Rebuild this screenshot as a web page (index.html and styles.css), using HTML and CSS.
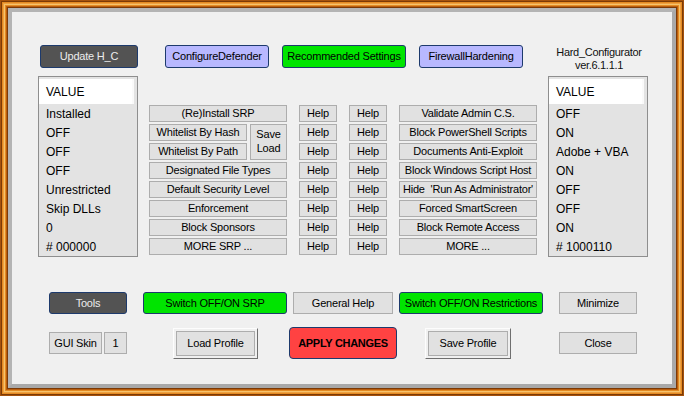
FILE: index.html
```html
<!DOCTYPE html>
<html>
<head>
<meta charset="utf-8">
<link rel="stylesheet" href="styles.css">
</head>
<body>
<div class="frame">
  <div class="win">
    <div class="row top">
      <div class="btn round dark w98 ml1">Update H_C</div>
      <div class="btn round lav w104 ml27">ConfigureDefender</div>
      <div class="btn round green w124 ml13">Recommended Settings</div>
      <div class="btn round lav w104 ml13">FirewallHardening</div>
      <div class="title ml26">
        <div>Hard_Configurator</div>
        <div>ver.6.1.1.1</div>
      </div>
    </div>

    <div class="row main">
      <div class="list">
        <div class="head">VALUE</div>
        <div class="item">Installed</div>
        <div class="item">OFF</div>
        <div class="item">OFF</div>
        <div class="item">OFF</div>
        <div class="item">Unrestricted</div>
        <div class="item">Skip DLLs</div>
        <div class="item">0</div>
        <div class="item"># 000000</div>
      </div>

      <div class="grid">
        <div class="btn flat">(Re)Install SRP</div>
        <div class="btn flat">Help</div>
        <div class="btn flat">Help</div>
        <div class="btn flat">Validate Admin C.S.</div>

        <div class="wl">
          <div class="btn flat hash">Whitelist By Hash</div>
          <div class="btn flat sl">Save<br>Load</div>
          <div class="btn flat path">Whitelist By Path</div>
        </div>
        <div class="btn flat">Help</div>
        <div class="btn flat">Help</div>
        <div class="btn flat">Block PowerShell Scripts</div>

        <div class="btn flat">Help</div>
        <div class="btn flat">Help</div>
        <div class="btn flat">Documents Anti-Exploit</div>

        <div class="btn flat">Designated File Types</div>
        <div class="btn flat">Help</div>
        <div class="btn flat">Help</div>
        <div class="btn flat">Block Windows Script Host</div>

        <div class="btn flat">Default Security Level</div>
        <div class="btn flat">Help</div>
        <div class="btn flat">Help</div>
        <div class="btn flat">Hide &nbsp;'Run As Administrator'</div>

        <div class="btn flat">Enforcement</div>
        <div class="btn flat">Help</div>
        <div class="btn flat">Help</div>
        <div class="btn flat">Forced SmartScreen</div>

        <div class="btn flat">Block Sponsors</div>
        <div class="btn flat">Help</div>
        <div class="btn flat">Help</div>
        <div class="btn flat">Block Remote Access</div>

        <div class="btn flat">MORE SRP ...</div>
        <div class="btn flat">Help</div>
        <div class="btn flat">Help</div>
        <div class="btn flat">MORE ...</div>
      </div>

      <div class="list ml11">
        <div class="head">VALUE</div>
        <div class="item">OFF</div>
        <div class="item">ON</div>
        <div class="item">Adobe + VBA</div>
        <div class="item">ON</div>
        <div class="item">OFF</div>
        <div class="item">OFF</div>
        <div class="item">ON</div>
        <div class="item"># 1000110</div>
      </div>
    </div>

    <div class="row b1">
      <div class="btn round dark w78">Tools</div>
      <div class="btn round green w144 ml16">Switch OFF/ON SRP</div>
      <div class="btn flat w100 ml6">General Help</div>
      <div class="btn round green w144 ml6">Switch OFF/ON Restrictions</div>
      <div class="btn flat w78 ml16">Minimize</div>
    </div>

    <div class="row b2">
      <div class="btn flat w53 h22">GUI Skin</div>
      <div class="btn flat w23 h22 ml2">1</div>
      <div class="btn3d w85 ml46"><span>Load Profile</span></div>
      <div class="btn round red w108 h32 ml31">APPLY CHANGES</div>
      <div class="btn3d w86 ml28"><span>Save Profile</span></div>
      <div class="btn flat w78 h22 ml48">Close</div>
    </div>
  </div>
</div>
</body>
</html>
```

FILE: styles.css
```css
* { box-sizing: border-box; }
html, body { margin: 0; padding: 0; }
body {
  width: 684px;
  height: 396px;
  overflow: hidden;
  font-family: "Liberation Sans", Arial, sans-serif;
  color: #000;
}
.frame {
  width: 684px;
  height: 396px;
  padding: 8px;
  background: #e0861c;
  box-shadow:
    inset 0 0 0 1px #a5520c,
    inset 0 0 0 2px #7c3a06,
    inset 0 0 0 3px #e48a22,
    inset 0 0 0 4px #eea040,
    inset 0 0 0 5px #f6c36c,
    inset 0 0 0 6px #e48a22,
    inset 0 0 0 7px #b85e10,
    inset 0 0 0 8px #7c3a06;
}
.win {
  width: 668px;
  height: 380px;
  border: 4px solid #a9a9a9;
  border-top-color: #b4b4b4;
  border-left-color: #b4b4b4;
  background: #f0f0f0;
  display: flex;
  flex-direction: column;
}
.row { display: flex; flex-shrink: 0; }

.top { margin-top: 33px; padding-left: 27px; height: 23px; align-items: stretch; }
.main { margin-top: 8px; padding-left: 26px; height: 181px; align-items: flex-start; }
.b1 { margin-top: 35px; padding-left: 37px; height: 22px; }
.b2 { margin-top: 13px; padding-left: 37px; height: 32px; align-items: center; }

.btn {
  display: flex;
  align-items: center;
  justify-content: center;
  font-size: 11px;
  letter-spacing: -0.2px;
  white-space: nowrap;
  line-height: 13px;
  text-align: center;
}
.flat { background: #e1e1e1; border: 1px solid #adadad; }
.round { border: 1px solid #1d3a6c; border-radius: 3px; }
.dark { background: #535353; color: #ececec; }
.lav { background: #b8b8ff; }
.green { background: #00e400; }
.red { background: #ff4242; font-weight: bold; letter-spacing: -0.3px; border-radius: 4px; }

.btn3d {
  height: 31px;
  padding: 2px;
  border: 1px solid;
  border-color: #fdfdfd #6f6f6f #6f6f6f #fdfdfd;
  background: #f0f0f0;
  display: flex;
}
.btn3d span {
  flex: 1;
  display: flex;
  align-items: center;
  justify-content: center;
  background: #e1e1e1;
  border: 1px solid #adadad;
  font-size: 11px;
  letter-spacing: -0.2px;
  white-space: nowrap;
}

.title {
  width: 100px;
  display: flex;
  flex-direction: column;
  align-items: center;
  justify-content: flex-start;
  padding-top: 1px;
  font-size: 11px;
  letter-spacing: -0.3px;
  line-height: 13px;
  color: #111;
}

.list {
  width: 100px;
  height: 181px;
  border: 1px solid #8e8e8e;
  background: #e3e3e3;
  padding-top: 2px;
  font-size: 12px;
}
.list .head {
  height: 25px;
  margin-right: 3px;
  background: #fff;
  border-right: 2px solid #fafafa;
  padding-left: 7px;
  display: flex;
  align-items: center;
}
.list .item {
  height: 19px;
  padding-left: 7px;
  display: flex;
  align-items: center;
}

.grid {
  margin-left: 11px;
  margin-top: 29px;
  display: grid;
  grid-template-columns: 138px 38px 38px 138px;
  grid-auto-rows: 17px;
  column-gap: 12px;
  row-gap: 2px;
}
.wl {
  grid-row: span 2;
  display: grid;
  grid-template-columns: 98px 37px;
  grid-template-rows: 17px 17px;
  column-gap: 3px;
  row-gap: 2px;
}
.wl .hash { grid-column: 1; grid-row: 1; }
.wl .path { grid-column: 1; grid-row: 2; }
.wl .sl { grid-column: 2; grid-row: 1 / span 2; line-height: 14px; padding-bottom: 3px; }

.w23 { width: 23px; }
.w53 { width: 53px; }
.w78 { width: 78px; }
.w85 { width: 85px; }
.w86 { width: 86px; }
.w98 { width: 98px; }
.w100 { width: 100px; }
.w104 { width: 104px; }
.w108 { width: 108px; }
.w124 { width: 124px; }
.w144 { width: 144px; }
.h22 { height: 22px; }
.h32 { height: 32px; }

.ml1 { margin-left: 1px; }
.ml2 { margin-left: 2px; }
.ml6 { margin-left: 6px; }
.ml11 { margin-left: 11px; }
.ml13 { margin-left: 13px; }
.ml16 { margin-left: 16px; }
.ml26 { margin-left: 26px; }
.ml27 { margin-left: 27px; }
.ml28 { margin-left: 28px; }
.ml31 { margin-left: 31px; }
.ml46 { margin-left: 46px; }
.ml48 { margin-left: 48px; }
```
